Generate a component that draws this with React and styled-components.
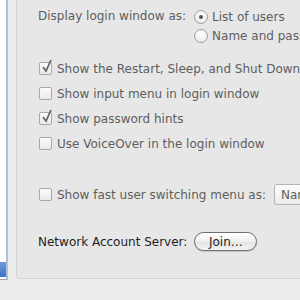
import React from "react";
import styled, { createGlobalStyle } from "styled-components";

const Global = createGlobalStyle`
  html, body {
    margin: 0;
    padding: 0;
    background: #ededed;
  }
  body {
    font-family: "Lucida Grande", "DejaVu Sans", sans-serif;
    overflow: hidden;
  }
`;

const Window = styled.div`
  width: 300px;
  height: 300px;
  display: flex;
  background: #ededed;
  overflow: hidden;
`;

const SideList = styled.div`
  flex: 0 0 8px;
  height: 280px;
  display: flex;
  flex-direction: column;
  justify-content: flex-end;
  background: #fff;
  border-right: 2px solid #a9c2df;
  border-bottom: 1px solid #9aa8b8;
  box-sizing: border-box;
  padding-bottom: 2px;
`;

const SideSelection = styled.div`
  height: 15px;
  background: linear-gradient(#6e9bd6, #3f75c4);
`;

const GroupBox = styled.div`
  margin-left: 8px;
  flex: 1;
  height: 279px;
  box-sizing: border-box;
  background: #e7e7e7;
  border: 1px solid #d2d2d2;
  border-top: none;
  border-right: none;
  border-radius: 0 0 0 4px;
  padding: 9px 0 0 21px;
  display: flex;
  flex-direction: column;
  white-space: nowrap;
  font-size: 12px;
  color: #5e5e5e;
`;

const Row = styled.div`
  display: flex;
  align-items: ${(p) => (p.top ? "flex-start" : "center")};
  height: ${(p) => p.h || 25}px;
  margin-top: ${(p) => p.mt || 0}px;
`;

const Label = styled.span`
  color: ${(p) => (p.dark ? "#1e1e1e" : "#5e5e5e")};
`;

const RadioGroup = styled.div`
  display: flex;
  flex-direction: column;
  gap: 4px;
  margin-left: 8px;
`;

const RadioItem = styled.div`
  display: flex;
  align-items: center;
  gap: 4px;
  height: 15px;
`;

const Radio = styled.span`
  width: 14px;
  height: 14px;
  border-radius: 50%;
  box-sizing: border-box;
  border: 1px solid #a0a0a0;
  background: radial-gradient(circle at 50% 35%, #ffffff, #e4e4e4);
  display: flex;
  align-items: center;
  justify-content: center;
  &::after {
    content: "";
    width: 4px;
    height: 4px;
    border-radius: 50%;
    background: ${(p) => (p.on ? "#555" : "transparent")};
  }
`;

const Box = styled.span`
  position: relative;
  flex: 0 0 13px;
  width: 13px;
  height: 13px;
  box-sizing: border-box;
  border: 1px solid #a8a8a8;
  border-radius: 2px;
  background: linear-gradient(#fdfdfd, #e9e9e9);
  margin-right: 5px;
  margin-left: 1px;
`;

const Tick = styled.svg`
  position: absolute;
  left: 1px;
  top: -4px;
`;

const Popup = styled.span`
  margin-left: 8px;
  height: 19px;
  padding: 0 6px;
  border: 1px solid #b4b4b4;
  border-radius: 3px;
  background: linear-gradient(#fcfcfc, #ececec);
  display: flex;
  align-items: center;
  color: #5e5e5e;
`;

const PushButton = styled.button`
  margin-left: 7px;
  height: 19px;
  width: 63px;
  border: 1px solid #6e6e6e;
  border-radius: 10px;
  background: linear-gradient(#ffffff, #f0f0f0 50%, #e2e2e2 51%, #f4f4f4);
  font-family: inherit;
  font-size: 12px;
  color: #1e1e1e;
  padding: 0;
  box-shadow: 0 1px 1px rgba(0, 0, 0, 0.15);
`;

const Check = ({ checked, children }) => (
  <Row>
    <Box>
      {checked && (
        <Tick width="12" height="14" viewBox="0 0 12 14">
          <path d="M2 8 L5 12 L10 1" fill="none" stroke="#666" strokeWidth="1.8" />
        </Tick>
      )}
    </Box>
    <Label>{children}</Label>
  </Row>
);

export default function App() {
  return (
    <Window>
      <Global />
      <SideList>
        <SideSelection />
      </SideList>
      <GroupBox>
        <Row h={47} top>
          <Label>Display login window as:</Label>
          <RadioGroup>
            <RadioItem>
              <Radio on />
              <Label>List of users</Label>
            </RadioItem>
            <RadioItem>
              <Radio />
              <Label>Name and password</Label>
            </RadioItem>
          </RadioGroup>
        </Row>
        <Check checked>Show the Restart, Sleep, and Shut Down buttons</Check>
        <Check>Show input menu in login window</Check>
        <Check checked>Show password hints</Check>
        <Check>Use VoiceOver in the login window</Check>
        <Row mt={26}>
          <Box />
          <Label>Show fast user switching menu as:</Label>
          <Popup>Name</Popup>
        </Row>
        <Row mt={22}>
          <Label dark>Network Account Server:</Label>
          <PushButton>Join…</PushButton>
        </Row>
      </GroupBox>
    </Window>
  );
}
